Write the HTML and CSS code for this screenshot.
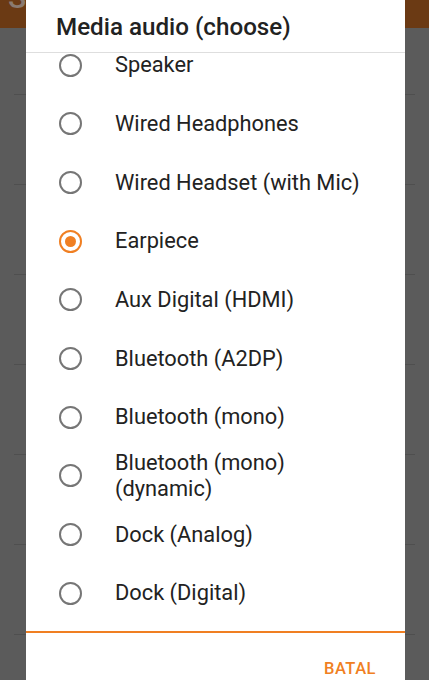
FILE: index.html
```html
<!DOCTYPE html>
<html lang="id">

<head>
    <meta charset="utf8">
    <title>Media audio</title>
    <link rel="stylesheet" href="styles.css">
</head>

<body>
    <div class="app">
        <div class="appbar">
            <span class="appbar-title">Se</span>
        </div>
        <div class="app-list">
            <div class="app-row"></div>
            <div class="app-row"></div>
            <div class="app-row"></div>
            <div class="app-row"></div>
            <div class="app-row"></div>
            <div class="app-row"></div>
            <div class="app-row"></div>
        </div>
    </div>

    <div class="dialog">
        <div class="dialog-title">Media audio (choose)</div>
        <div class="choices">
            <ul class="choice-list">
                <li class="choice"><span class="radio"></span><span class="label">Speaker</span></li>
                <li class="choice"><span class="radio"></span><span class="label">Wired Headphones</span></li>
                <li class="choice"><span class="radio"></span><span class="label">Wired Headset (with Mic)</span></li>
                <li class="choice checked"><span class="radio"></span><span class="label">Earpiece</span></li>
                <li class="choice"><span class="radio"></span><span class="label">Aux Digital (HDMI)</span></li>
                <li class="choice"><span class="radio"></span><span class="label">Bluetooth (A2DP)</span></li>
                <li class="choice"><span class="radio"></span><span class="label">Bluetooth (mono)</span></li>
                <li class="choice"><span class="radio"></span><span class="label">Bluetooth (mono)<br>(dynamic)</span></li>
                <li class="choice"><span class="radio"></span><span class="label">Dock (Analog)</span></li>
                <li class="choice"><span class="radio"></span><span class="label">Dock (Digital)</span></li>
            </ul>
        </div>
        <div class="actions">
            <button class="btn-cancel">BATAL</button>
        </div>
    </div>
</body>

</html>
```

FILE: styles.css
```css
* {
    box-sizing: border-box;
}

html, body {
    margin: 0;
    height: 100%;
    overflow: hidden;
}

body {
    font-family: Roboto, "Noto Sans", sans-serif;
    background-color: #5b5b5b;
    position: relative;
}

/* app behind the dialog */

.appbar {
    height: 28px;
    background-color: #6b3a14;
    overflow: hidden;
}

.appbar-title {
    display: block;
    margin-top: -20px;
    margin-left: 8px;
    font-size: 30px;
    font-weight: 500;
    color: #8a7a70;
}

.app-list {
    padding: 0 14px;
}

.app-row {
    height: 90px;
    border-bottom: 1px solid #4f4f4f;
}

.app-row:first-child {
    height: 67px;
}

/* dialog */

.dialog {
    position: absolute;
    top: 0;
    left: 26px;
    width: 379px;
    height: 720px;
    background-color: #fff;
    display: flex;
    flex-direction: column;
}

.dialog-title {
    flex: none;
    height: 53px;
    padding: 13px 0 0 30px;
    font-size: 24.2px;
    font-weight: 500;
    color: #222;
    border-bottom: 1px solid #dedede;
}

.choices {
    flex: none;
    height: 580px;
    overflow: hidden;
    border-bottom: 2px solid #f07f22;
}

.choice-list {
    list-style: none;
    margin: -17px 0 0 0;
    padding: 0;
}

.choice {
    height: 58.67px;
    display: flex;
    align-items: center;
    padding-left: 33px;
}

.radio {
    flex: none;
    width: 23px;
    height: 23px;
    border: 2px solid #767676;
    border-radius: 50%;
    display: flex;
    align-items: center;
    justify-content: center;
}

.choice.checked .radio {
    border-color: #f07f22;
}

.choice.checked .radio:after {
    content: "";
    width: 11px;
    height: 11px;
    border-radius: 50%;
    background-color: #f07f22;
}

.label {
    margin-left: 33px;
    font-size: 21.8px;
    line-height: 26px;
    color: #222;
}

.actions {
    display: flex;
    justify-content: flex-end;
    padding: 26px 29px 0 0;
}

.btn-cancel {
    background-color: transparent;
    border: 0 none;
    padding: 0;
    font-family: Roboto, "Noto Sans", sans-serif;
    font-size: 16.5px;
    font-weight: 500;
    letter-spacing: 0.5px;
    color: #f07f22;
    cursor: pointer;
}
```
